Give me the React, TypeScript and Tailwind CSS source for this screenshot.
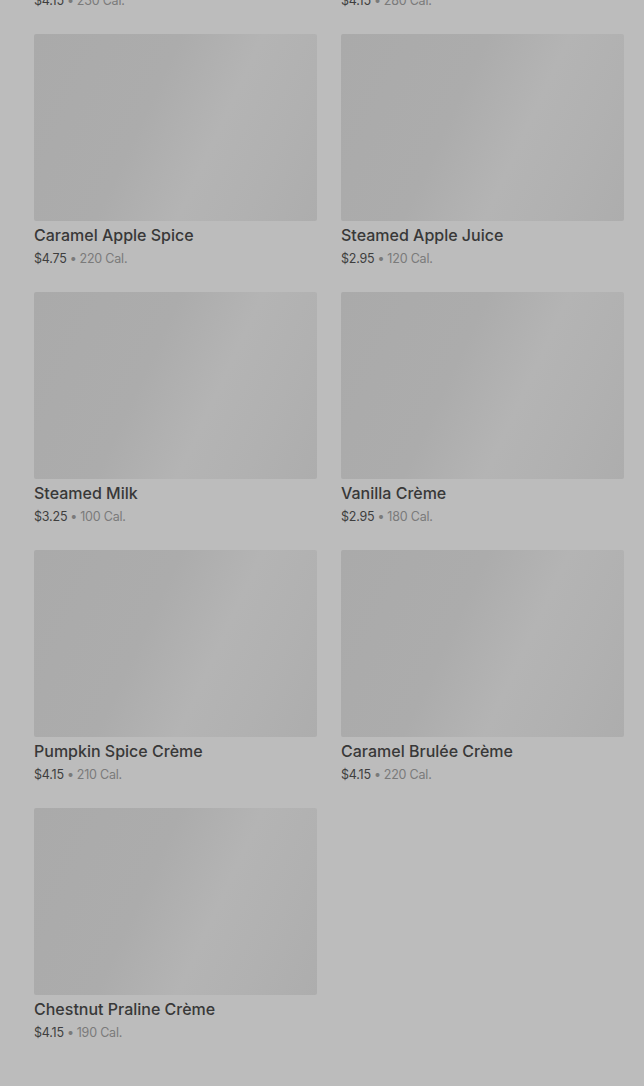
import React from 'react';

type Item = { name: string; price: string; cal: string };

const items: Item[] = [
  { name: 'Caramel Brulée Latte', price: '$4.15', cal: '230 Cal.' },
  { name: 'Pumpkin Spice Latte', price: '$4.15', cal: '280 Cal.' },
  { name: 'Caramel Apple Spice', price: '$4.75', cal: '220 Cal.' },
  { name: 'Steamed Apple Juice', price: '$2.95', cal: '120 Cal.' },
  { name: 'Steamed Milk', price: '$3.25', cal: '100 Cal.' },
  { name: 'Vanilla Crème', price: '$2.95', cal: '180 Cal.' },
  { name: 'Pumpkin Spice Crème', price: '$4.15', cal: '210 Cal.' },
  { name: 'Caramel Brulée Crème', price: '$4.15', cal: '220 Cal.' },
  { name: 'Chestnut Praline Crème', price: '$4.15', cal: '190 Cal.' },
];

const MenuCard = ({ item }: { item: Item }) => (
  <div className="flex flex-col">
    <div className="h-[187px] w-full rounded-[2px] bg-[linear-gradient(115deg,#aaaaaa_0%,#acacac_40%,#b4b4b4_62%,#b1b1b1_80%,#adadad_100%)]" />
    <div className="mt-1 text-[16px] leading-[20px] font-medium text-[#383838]">
      {item.name}
    </div>
    <div className="mt-[5px] text-[12.5px] leading-[18px] text-[#7a7a7a] tracking-[-0.2px]">
      <span className="text-[#3e3e3e]">{item.price}</span>
      <span className="mx-[3px]">•</span>
      {item.cal}
    </div>
  </div>
);

export default function App() {
  return (
    <div
      className="h-[1086px] w-full overflow-hidden bg-[#bcbcbc]"
      style={{ fontFamily: 'Inter, "Noto Sans", sans-serif' }}
    >
      <div className="mt-[-224px] grid grid-cols-2 gap-x-6 gap-y-[24px] pl-[34px] pr-[20px]">
        {items.map((item) => (
          <MenuCard key={item.name} item={item} />
        ))}
      </div>
    </div>
  );
}
